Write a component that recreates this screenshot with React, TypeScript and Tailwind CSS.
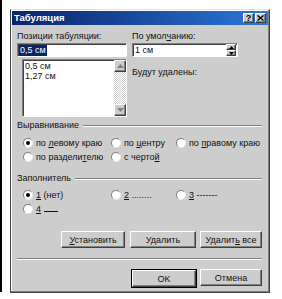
import type { ReactNode } from "react";

const sunken =
  "border border-t-[#808080] border-l-[#808080] border-b-white border-r-white shadow-[inset_1px_1px_0_#404040]";
const raised =
  "border border-t-white border-l-white border-b-[#404040] border-r-[#404040] shadow-[inset_-1px_-1px_0_#808080]";

function U({ children }: { children: ReactNode }) {
  return <span className="underline underline-offset-[1px]">{children}</span>;
}

function Radio({ checked, children }: { checked?: boolean; children: ReactNode }) {
  return (
    <div className="flex items-center h-[14px] gap-[3px]">
      <div className="w-[10px] h-[10px] rounded-full bg-white border border-t-[#808080] border-l-[#808080] border-b-[#e8e8e8] border-r-[#e8e8e8] flex items-center justify-center shrink-0">
        {checked && <div className="w-[4px] h-[4px] rounded-full bg-black" />}
      </div>
      <span className="whitespace-nowrap leading-[12px]">{children}</span>
    </div>
  );
}

function GroupHeader({ label, className }: { label: string; className?: string }) {
  return (
    <div className={`flex items-center h-[11px] ${className ?? ""}`}>
      <span className="pr-[4px] leading-[11px] whitespace-nowrap">{label}</span>
      <div className="flex-1 h-[2px] border-t border-t-[#808080] border-b border-b-white" />
    </div>
  );
}

function Button({ children, w, isDefault }: { children: ReactNode; w: string; isDefault?: boolean }) {
  const btn = (
    <div className={`h-[17px] ${w} ${raised} bg-[#cdcdcd] flex items-center justify-center leading-[12px]`}>
      <span className="whitespace-nowrap">{children}</span>
    </div>
  );
  if (!isDefault) return btn;
  return <div className="border border-black">{btn}</div>;
}

function Arrow({ up, color = "#000" }: { up?: boolean; color?: string }) {
  return (
    <svg width="7" height="4" viewBox="0 0 7 4">
      {up ? (
        <polygon points="0,4 7,4 3.5,0" fill={color} />
      ) : (
        <polygon points="0,0 7,0 3.5,4" fill={color} />
      )}
    </svg>
  );
}

export default function App() {
  return (
    <div
      className="w-[282px] h-[299px] bg-white text-[9px] text-[#111]"
      style={{ fontFamily: '"Liberation Sans", Arial, sans-serif' }}
    >
      <div className="h-[292px] border-l-2 border-black pt-[9px] pl-[8px]">
        {/* dialog window */}
        <div className="w-[260px] h-[284px] bg-[#cdcdcd] border border-t-[#e0e0e0] border-l-[#404040] border-b-[#404040] border-r-[#404040] shadow-[inset_-1px_-1px_0_#808080,inset_1px_1px_0_#ffffff] p-[1px] flex flex-col">
          {/* title bar */}
          <div className="h-[14px] bg-gradient-to-r from-[#0a246a] to-[#2b78d8] flex items-center pl-[2px] pr-[2px]">
            <span className="text-white font-bold text-[9.5px] leading-[14px]">Табуляция</span>
            <div className="ml-auto flex gap-[1px]">
              <div className={`w-[11px] h-[10px] ${raised} bg-[#cdcdcd] flex items-center justify-center font-bold text-[9px] leading-[8px] text-black`}>
                ?
              </div>
              <div className={`w-[11px] h-[10px] ${raised} bg-[#cdcdcd] flex items-center justify-center`}>
                <svg width="7" height="6" viewBox="0 0 7 6">
                  <path d="M0.5 0.5 L6.5 5.5 M6.5 0.5 L0.5 5.5" stroke="#000" strokeWidth="1.4" />
                </svg>
              </div>
            </div>
          </div>

          {/* body */}
          <div className="flex-1 pl-[5px] pr-[6px] pt-[5px] flex flex-col">
            <div className="flex gap-[5px]">
              {/* left column */}
              <div className="w-[110px] flex flex-col">
                <div className="h-[12px] leading-[12px]">Позиции табуляции:</div>
                <div className={`mt-[1px] h-[14px] ${sunken} bg-white flex items-center pl-[1px]`}>
                  <span className="bg-[#0a246a] text-white leading-[11px] px-[1px]">0,5 см</span>
                </div>
                <div className={`mt-[2px] ml-[5px] h-[58px] ${sunken} bg-white flex`}>
                  <div className="flex-1 pl-[2px] pt-[1px] flex flex-col">
                    <div className="leading-[10px] h-[10px]">0,5 см</div>
                    <div className="leading-[10px] h-[10px]">1,27 см</div>
                  </div>
                  <div className="w-[12px] flex flex-col bg-[repeating-conic-gradient(#ffffff_0_25%,#d0d0d0_0_50%)] bg-[length:2px_2px]">
                    <div className={`h-[12px] ${raised} bg-[#cdcdcd] flex items-center justify-center`}>
                      <Arrow up color="#808080" />
                    </div>
                    <div className="flex-1" />
                    <div className={`h-[12px] ${raised} bg-[#cdcdcd] flex items-center justify-center`}>
                      <Arrow color="#808080" />
                    </div>
                  </div>
                </div>
              </div>

              {/* right column */}
              <div className="w-[106px] flex flex-col">
                <div className="h-[12px] leading-[12px]">
                  По умол<U>ч</U>анию:
                </div>
                <div className={`mt-[1px] h-[14px] ${sunken} bg-white flex items-center pl-[2px]`}>
                  <span className="leading-[11px]">1 см</span>
                  <div className="ml-auto flex flex-col mr-[1px]">
                    <div className={`w-[10px] h-[6px] ${raised} bg-[#cdcdcd] flex items-center justify-center`}>
                      <svg width="5" height="3" viewBox="0 0 5 3"><polygon points="0,3 5,3 2.5,0" fill="#000" /></svg>
                    </div>
                    <div className={`w-[10px] h-[6px] ${raised} bg-[#cdcdcd] flex items-center justify-center`}>
                      <svg width="5" height="3" viewBox="0 0 5 3"><polygon points="0,0 5,0 2.5,3" fill="#000" /></svg>
                    </div>
                  </div>
                </div>
                <div className="mt-[9px] leading-[12px]">Будут удалены:</div>
              </div>
            </div>

            {/* alignment */}
            <GroupHeader label="Выравнивание" className="mt-[3px]" />
            <div className="pt-[5px] pl-[6px] grid grid-cols-[88px_65px_1fr]">
              <Radio checked>
                по <U>л</U>евому краю
              </Radio>
              <Radio>
                по <U>ц</U>ентру
              </Radio>
              <Radio>
                по <U>п</U>равому краю
              </Radio>
              <Radio>
                по раздели<U>т</U>елю
              </Radio>
              <Radio>
                с черто<U>й</U>
              </Radio>
            </div>

            {/* leader */}
            <GroupHeader label="Заполнитель" className="mt-[9px]" />
            <div className="pt-[4px] pl-[6px] grid grid-cols-[88px_65px_1fr]">
              <Radio checked>
                <U>1</U> (нет)
              </Radio>
              <Radio>
                <U>2</U> ........
              </Radio>
              <Radio>
                <U>3</U> -------
              </Radio>
              <Radio>
                <U>4</U> <span className="inline-block w-[14px] border-b border-[#111] align-baseline" />
              </Radio>
            </div>

            {/* action buttons */}
            <div className="mt-[15px] flex justify-end gap-[4px]">
              <div className="mr-[1px]">
                <Button w="w-[64px]">
                  <U>У</U>становить
                </Button>
              </div>
              <Button w="w-[66px]">Удалить</Button>
              <Button w="w-[62px]">
                Удалит<U>ь</U> все
              </Button>
            </div>

            <div className="mt-[10px] h-[2px] border-t border-t-[#808080] border-b border-b-white" />

            <div className="mt-[9px] flex justify-end gap-[3px]">
              <Button w="w-[64px]" isDefault>
                OK
              </Button>
              <Button w="w-[62px]">Отмена</Button>
            </div>
          </div>
        </div>
      </div>
    </div>
  );
}
